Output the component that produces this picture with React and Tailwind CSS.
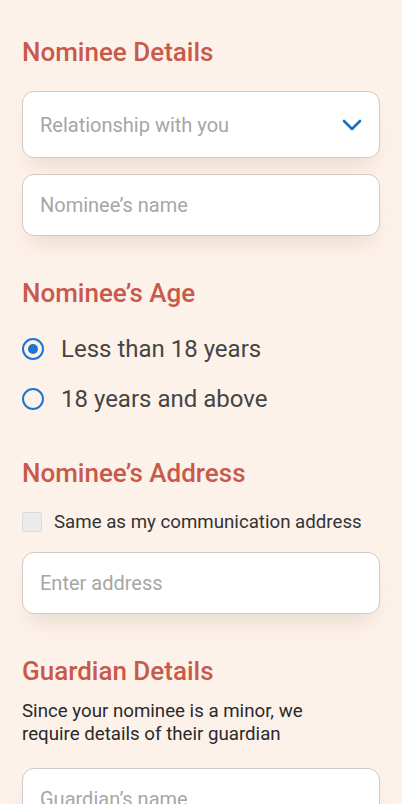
import React, { useState } from "react";

const font = { fontFamily: "Roboto, 'Noto Sans', sans-serif" };

const Heading = ({ children, className = "" }) => (
  <h2 className={`text-[26px] leading-[30px] font-medium text-[#c85a4b] ${className}`}>
    {children}
  </h2>
);

const Field = ({ placeholder, tall, children }) => (
  <div
    className={`flex items-center justify-between w-full ${
      tall ? "h-[67px]" : "h-[62px]"
    } bg-white border border-[#d2c9c4] rounded-[12px] pl-[17px] pr-[17px] shadow-[0_14px_22px_-8px_rgba(120,80,50,0.16)]`}
  >
    <span className="text-[20px] text-[#a6a6a6] whitespace-nowrap">{placeholder}</span>
    {children}
  </div>
);

const Radio = ({ checked, label, onClick }) => (
  <button onClick={onClick} className="flex items-center gap-[17px] h-[50px] text-left">
    <span className="w-[22px] h-[22px] rounded-full border-[2px] border-[#1f74d0] flex items-center justify-center">
      {checked && <span className="w-[10px] h-[10px] rounded-full bg-[#1f74d0]" />}
    </span>
    <span className="text-[24px] text-[#454545]">{label}</span>
  </button>
);

export default function App() {
  const [age, setAge] = useState("minor");

  return (
    <div style={font} className="h-[804px] w-full bg-[#fdf2ea] px-[22px] pt-[37px] overflow-hidden">
      <Heading>Nominee Details</Heading>
      <div className="flex flex-col gap-[16px] mt-[24px]">
        <Field placeholder="Relationship with you" tall>
          <svg width="20" height="12" viewBox="0 0 20 12" fill="none">
            <path d="M2 2l8 8 8-8" stroke="#1b6ec2" strokeWidth="2.6" strokeLinecap="round" strokeLinejoin="round" />
          </svg>
        </Field>
        <Field placeholder="Nominee’s name" />
      </div>

      <Heading className="mt-[42px]">Nominee’s Age</Heading>
      <div className="flex flex-col mt-[16px]">
        <Radio checked={age === "minor"} label="Less than 18 years" onClick={() => setAge("minor")} />
        <Radio checked={age === "major"} label="18 years and above" onClick={() => setAge("major")} />
      </div>

      <Heading className="mt-[34px]">Nominee’s Address</Heading>
      <label className="flex items-center gap-[12px] h-[24px] mt-[22px]">
        <span className="w-[20px] h-[20px] rounded-[3px] bg-[#ebebeb] border border-[#d9d9d9]" />
        <span className="text-[18.7px] text-[#333333] whitespace-nowrap">Same as my communication address</span>
      </label>
      <div className="mt-[18px]">
        <Field placeholder="Enter address" />
      </div>

      <Heading className="mt-[42px]">Guardian Details</Heading>
      <p className="mt-[14px] text-[18.7px] leading-[23px] text-[#2a2a2a] w-[300px]">
        Since your nominee is a minor, we require details of their guardian
      </p>
      <div className="mt-[22px]">
        <Field placeholder="Guardian’s name" />
      </div>
    </div>
  );
}
